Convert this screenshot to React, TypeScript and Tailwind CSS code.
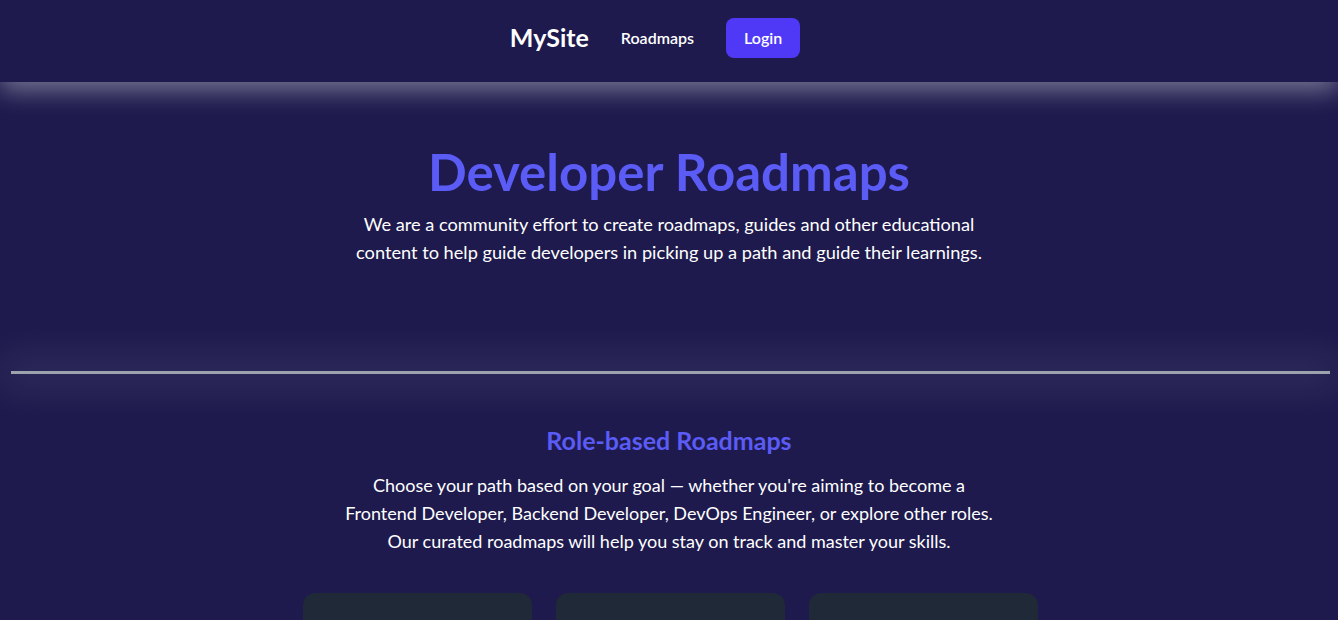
import React from 'react';

const roles = ['Frontend', 'Backend', 'DevOps'];

function Header() {
  return (
    <header className="relative z-10 h-[82px] bg-[#1e1a4d] shadow-[0_8px_24px_rgba(255,255,255,0.4)]">
      <nav className="h-full flex items-center justify-center gap-8 pr-7 pb-1.5">
        <a href="#" className="text-[25px] font-bold text-white">MySite</a>
        <a href="#" className="text-base font-semibold text-white">Roadmaps</a>
        <button className="h-10 px-[18px] rounded-lg bg-indigo-600 text-base font-semibold text-white">
          Login
        </button>
      </nav>
    </header>
  );
}

export default function App() {
  return (
    <div
      className="min-h-screen bg-[#1e1a4d] text-white"
      style={{ fontFamily: 'Lato, "Open Sans", sans-serif' }}
    >
      <Header />

      {/* Hero */}
      <section className="pt-16 text-center">
        <h1 className="text-[51px] leading-none font-bold text-[#5b5bf6]">Developer Roadmaps</h1>
        <p className="mt-[13px] text-[18.2px] leading-7">
          We are a community effort to create roadmaps, guides and other educational
          <br />
          content to help guide developers in picking up a path and guide their learnings.
        </p>
      </section>

      {/* Divider */}
      <div className="mt-[105px] ml-[11px] mr-2 h-[3px] bg-[#9ca3af] shadow-[0_0_40px_12px_rgba(255,255,255,0.11)]" />

      {/* Role based */}
      <section className="pt-[50px] text-center">
        <h2 className="text-[25px] leading-8 font-bold text-[#5b5bf6]">Role-based Roadmaps</h2>
        <p className="mt-[15px] text-lg leading-7">
          Choose your path based on your goal — whether you're aiming to become a
          <br />
          Frontend Developer, Backend Developer, DevOps Engineer, or explore other roles.
          <br />
          Our curated roadmaps will help you stay on track and master your skills.
        </p>

        <div className="max-w-[771px] mx-auto pl-[19px] pr-4 mt-[38px] grid grid-cols-3 gap-6">
          {roles.map(r => (
            <div key={r} aria-label={r} className="h-44 rounded-xl bg-[#1f2937]" />
          ))}
        </div>
      </section>
    </div>
  );
}
